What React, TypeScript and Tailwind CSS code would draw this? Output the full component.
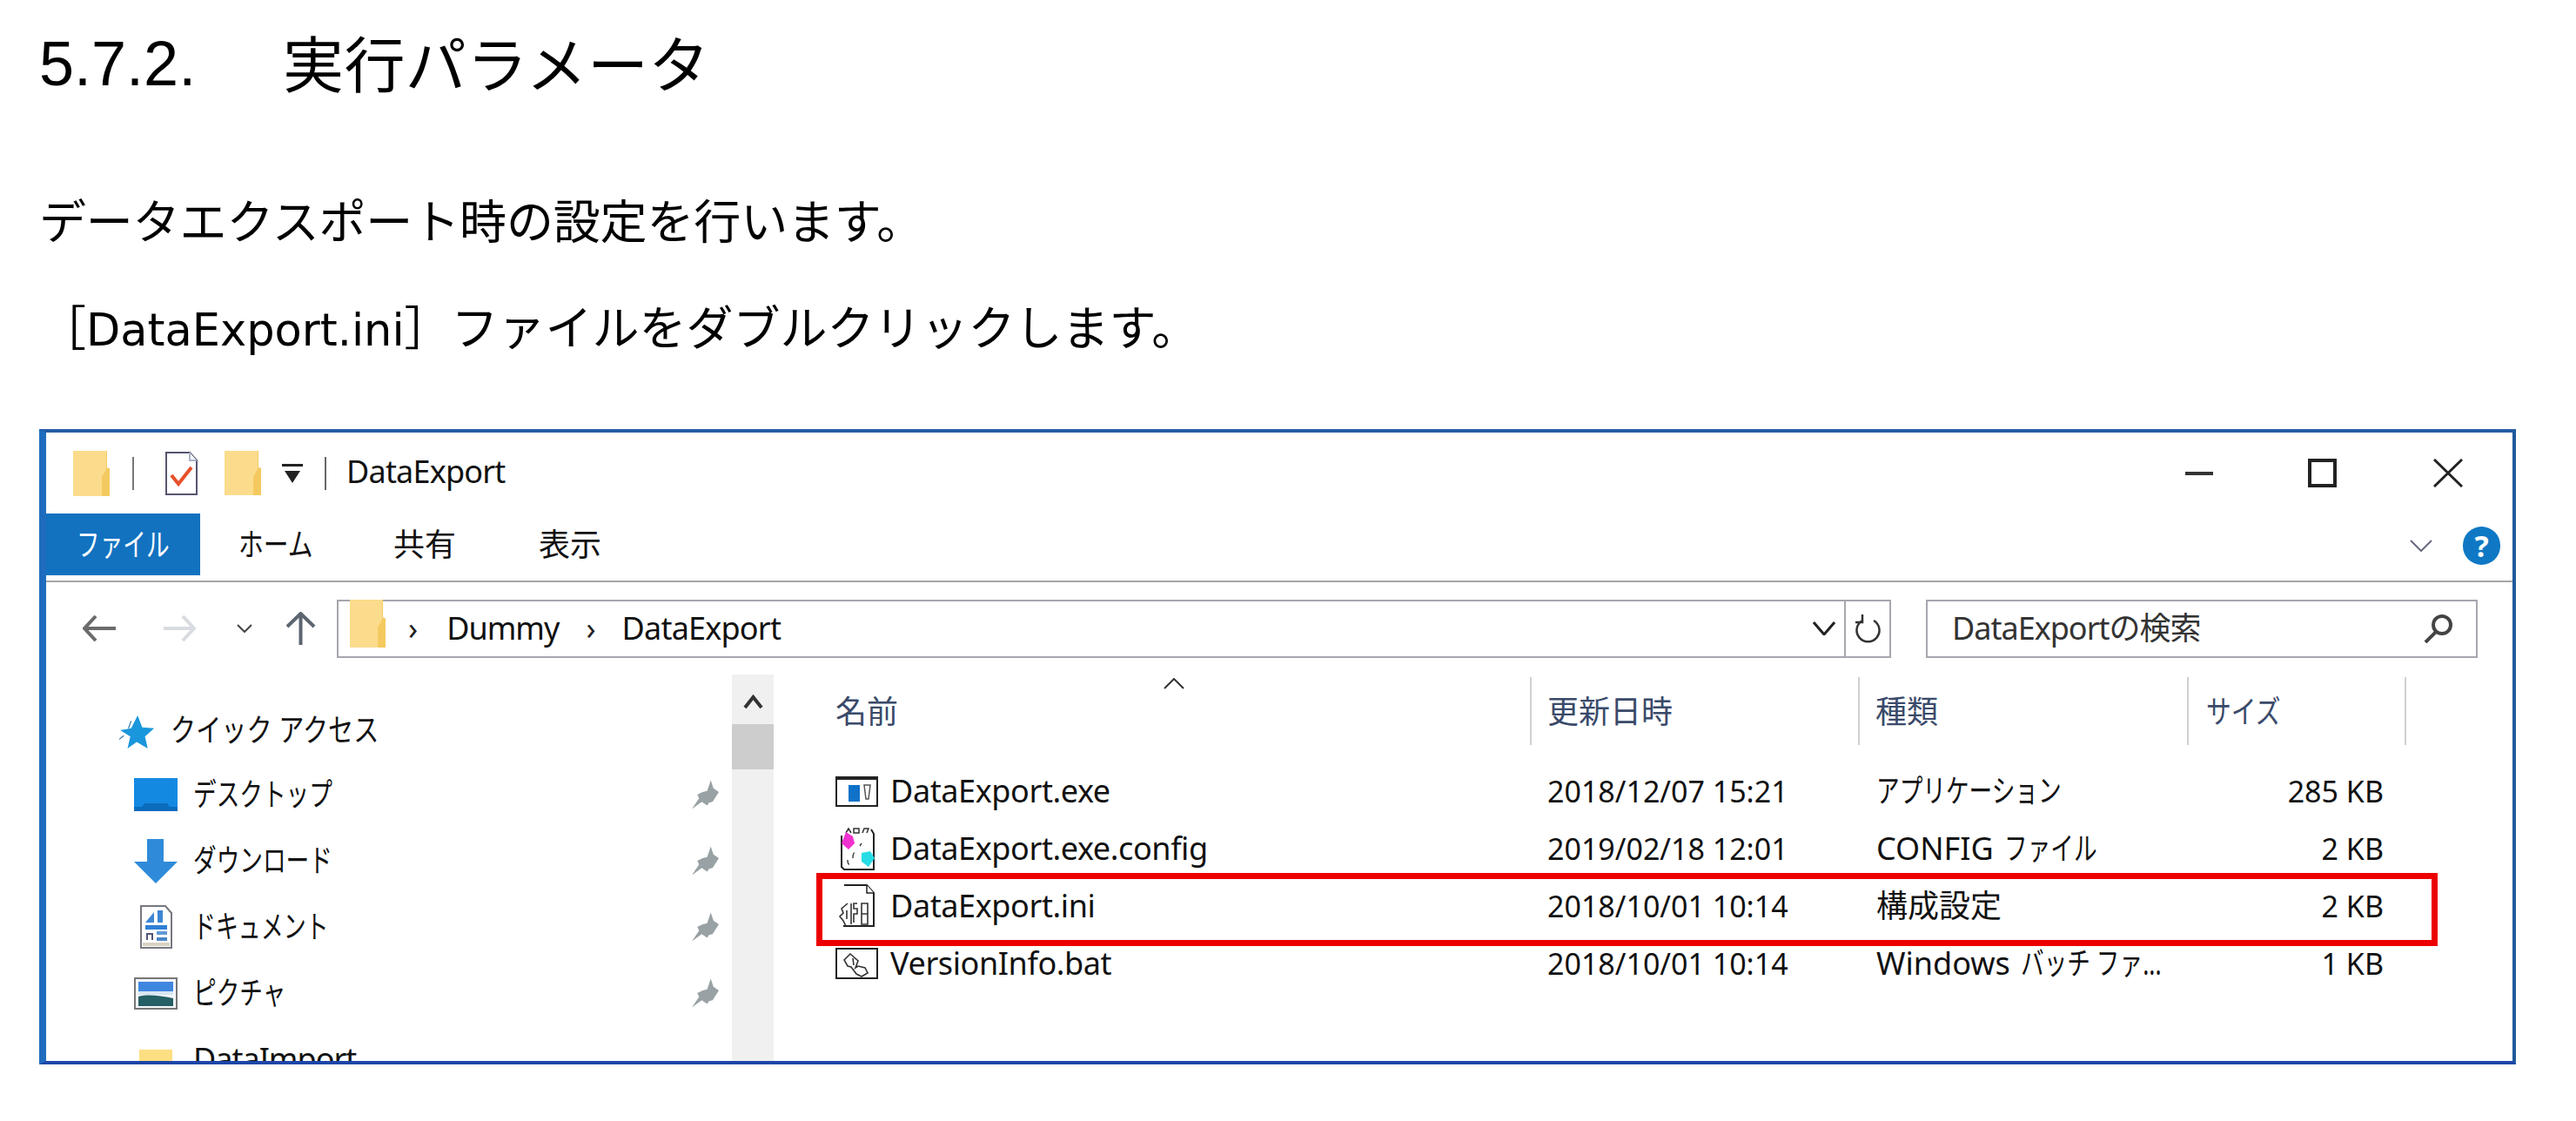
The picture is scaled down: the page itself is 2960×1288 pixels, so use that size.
const sans = "font-['Noto_Sans','Noto_Sans_CJK_JP',sans-serif]";

function Folder({ className }: { className: string }) {
  return (
    <svg className={className} viewBox="0 0 42 52" preserveAspectRatio="none">
      <rect width="39" height="52" fill="#fbdc8c" />
      <path d="M39 0h-1v52h4V22l-3-3z" fill="#f3cb66" />
      <path d="M33 52V30l6-10h3v32z" fill="#f4c95f" />
    </svg>
  );
}

function Pin() {
  return (
    <svg className="w-[32px] h-[34px] ml-auto mr-[15px]" viewBox="0 0 31 32">
      <path d="M22 0l3 9 6 4-7 11-4 1-2 3-6-4-11 8 8-12-2-4 6-3 5-1 2-6z" fill="#98a1a4" />
    </svg>
  );
}

function Narrow({ children, className }: { children: string; className: string }) {
  return <span className={"inline-block origin-left whitespace-nowrap " + className}>{children}</span>;
}

function ExeIcon() {
  return (
    <svg className="w-[49px] h-[36px]" viewBox="0 0 49 36">
      <rect x="1" y="2" width="47" height="33" fill="#fff" stroke="#222" strokeWidth="2" />
      <rect x="1" y="1" width="47" height="4" fill="#222" />
      <rect x="15" y="11" width="13" height="19" fill="#0f72c8" />
      <path d="M33 11h7l-2 16h-3z" fill="none" stroke="#555" strokeWidth="1.5" />
    </svg>
  );
}

function ConfigIcon() {
  return (
    <svg className="w-[42px] h-[50px]" viewBox="0 0 42 50">
      <path d="M3 10v36l3 3h34V8l-3-5" fill="#fff" stroke="#222" strokeWidth="2" />
      <path d="M8 7l3-5 3 5M17 2h6v5h-6zM27 7l2-5h5l-2 5" fill="none" stroke="#333" strokeWidth="1.5" />
      <path d="M8 6l8 5 2 8-7 7-8-7z" fill="#f032cf" />
      <path d="M26 30l10-2 5 8-7 10-8-6z" fill="#28dce6" />
      <path d="M16 36c0-4 1-6 2-6M24 22l2-3M10 38c0 3 1 5 2 5" fill="none" stroke="#444" strokeWidth="1.5" />
    </svg>
  );
}

function IniIcon() {
  return (
    <svg className="w-[42px] h-[50px]" viewBox="0 0 42 50">
      <path d="M6 1h26l8 9v38H5" fill="#fff" stroke="#222" strokeWidth="2" />
      <path d="M32 1v9h8" fill="#fff" stroke="#222" strokeWidth="1.5" />
      <path d="M10 22l-7 6 2 5-4 4 4 5 3 6M14 22v24M21 22h-4v6h4v6h-4v10M26 22h7v24h-7zM26 34h7M9 30v10" fill="none" stroke="#333" strokeWidth="1.6" />
    </svg>
  );
}

function BatIcon() {
  return (
    <svg className="w-[49px] h-[36px]" viewBox="0 0 49 36">
      <rect x="1" y="1" width="47" height="34" fill="#fff" stroke="#222" strokeWidth="2" />
      <path d="M10 14l7-7 9 8-3 8 3-2 8 2 3 6-7 4-6-3-6-8-4-1zM20 12l1 8" fill="none" stroke="#333" strokeWidth="1.6" />
    </svg>
  );
}

const navRows = [
  {
    label: <Narrow className="scale-x-[.74]">デスクトップ</Narrow>,
    icon: (
      <svg className="w-[50px] h-[38px]" viewBox="0 0 50 38">
        <rect width="50" height="38" fill="#1489e2" />
        <path d="M0 33h9l3-4h26l3 4h9v5H0z" fill="#0b6cbd" />
      </svg>
    ),
  },
  {
    label: <Narrow className="scale-x-[.74]">ダウンロード</Narrow>,
    icon: (
      <svg className="w-[50px] h-[51px]" viewBox="0 0 50 51">
        <path d="M15 0h19v26h16L25 51 0 26h15z" fill="#2f8bd9" />
      </svg>
    ),
  },
  {
    label: <Narrow className="scale-x-[.72]">ドキュメント</Narrow>,
    icon: (
      <svg className="w-[37px] h-[50px]" viewBox="0 0 37 50">
        <path d="M1 1h28l7 8v40H1z" fill="#fff" stroke="#77777f" strokeWidth="2" />
        <path d="M6 20l10-12v12zM20 6h6v14h-6z" fill="#3d86d2" />
        <rect x="6" y="23" width="25" height="5" fill="#2f7fd6" />
        <rect x="19" y="30" width="12" height="4" fill="#5f9ad8" />
        <rect x="19" y="37" width="12" height="4" fill="#4a86c8" />
        <path d="M8 40v-7h6v7" fill="none" stroke="#557" strokeWidth="2" />
        <rect x="3" y="43" width="31" height="4" fill="#d9d2c2" />
      </svg>
    ),
  },
  {
    label: <Narrow className="scale-x-[.74]">ピクチャ</Narrow>,
    icon: (
      <svg className="w-[50px] h-[37px]" viewBox="0 0 50 37">
        <rect x="1" y="1" width="48" height="35" fill="#f4f6f8" stroke="#777" strokeWidth="2" />
        <rect x="5" y="5" width="40" height="11" fill="#3f86df" />
        <path d="M5 16h40v4H5z" fill="#d8e6f2" />
        <path d="M5 22c12-3 24-1 40 2v9H5z" fill="#265f66" />
      </svg>
    ),
  },
  {
    label: <span className="whitespace-nowrap tracking-[-1px]">DataImport</span>,
    icon: <div className="w-[38px] h-[50px] mt-[28px] bg-[#fddf82]" />,
    plain: true,
  },
];

const fileRows = [
  { icon: <ExeIcon />, name: "DataExport.exe", date: "2018/12/07 15:21", type: <Narrow className="scale-x-[.74]">アプリケーション</Narrow>, size: "285 KB" },
  {
    icon: <ConfigIcon />,
    name: "DataExport.exe.config",
    date: "2019/02/18 12:01",
    type: (
      <span className="flex whitespace-nowrap">
        <span className="mr-[12px]">CONFIG</span>
        <Narrow className="scale-x-[.74]">ファイル</Narrow>
      </span>
    ),
    size: "2 KB",
  },
  { icon: <IniIcon />, name: "DataExport.ini", date: "2018/10/01 10:14", type: "構成設定", size: "2 KB" },
  {
    icon: <BatIcon />,
    name: "VersionInfo.bat",
    date: "2018/10/01 10:14",
    type: (
      <span className="flex whitespace-nowrap">
        <span className="mr-[12px]">Windows</span>
        <Narrow className="scale-x-[.74]">バッチ ファ...</Narrow>
      </span>
    ),
    size: "1 KB",
  },
];

export default function App() {
  return (
    <div className={"w-[2960px] h-[1288px] overflow-hidden bg-white pl-[45px] pt-[38px] text-black " + sans}>
      <h1 className="flex h-[70px] items-center text-[72px] font-normal font-['Liberation_Sans','Noto_Sans_CJK_JP',sans-serif]">
        <span className="w-[280px]">5.7.2.</span>
        <span className="mt-[-6px] text-[70px] tracking-[0.4px] font-['Noto_Sans_CJK_JP',sans-serif]">実行パラメータ</span>
      </h1>
      <p className="mt-[114px] h-[60px] text-[54px] leading-[60px] tracking-[-0.15px] font-['Noto_Sans_CJK_JP',sans-serif]">
        データエクスポート時の設定を行います。
      </p>
      <p className="mt-[62px] h-[60px] whitespace-nowrap text-[54px] leading-[60px] font-['Noto_Sans_CJK_JP',sans-serif]">
        ［<span className="text-[51px] font-['DejaVu_Sans',sans-serif]">DataExport.ini</span>］ファイルをダブルクリックします。
      </p>

      <div className="mt-[89px] flex h-[730px] w-[2846px] flex-col border-t-[4px] border-r-[4px] border-b-[4px] border-l-[8px] border-t-[#265ca6] border-r-[#1f5a9a] border-b-[#1c46a8] border-l-[#1f6cbf] text-[36px] leading-[44px] text-[#111]">
        {/* title bar */}
        <div className="flex h-[93px] shrink-0 items-center pl-[31px] pr-[57px]">
          <Folder className="h-[52px] w-[42px]" />
          <div className="ml-[26px] h-[38px] w-[2px] bg-[#777]" />
          <svg className="ml-[36px] h-[50px] w-[37px]" viewBox="0 0 37 50">
            <path d="M1 1h27l8 9v39H1z" fill="#fff" stroke="#55556f" strokeWidth="2" />
            <path d="M28 1v9h8" fill="#fff" stroke="#a8b4c8" strokeWidth="2" />
            <path d="M7 27l8 10L30 18" fill="none" stroke="#e8502a" strokeWidth="4" />
          </svg>
          <Folder className="ml-[31px] h-[51px] w-[42px]" />
          <svg className="ml-[24px] h-[24px] w-[24px]" viewBox="0 0 24 24">
            <rect width="24" height="3" y="1" fill="#222" />
            <path d="M3 9h18l-9 14z" fill="#222" />
          </svg>
          <div className="ml-[25px] h-[38px] w-[2px] bg-[#666]" />
          <span className="ml-[23px] mt-[-3px] tracking-[-0.8px]">DataExport</span>
          <div className="ml-auto h-[4px] w-[32px] bg-[#333]" />
          <div className="ml-[109px] h-[33px] w-[33px] border-[4px] border-[#222]" />
          <svg className="ml-[111px] h-[33px] w-[34px]" viewBox="0 0 34 33">
            <path d="M1 1l32 31M33 1L1 32" stroke="#222" strokeWidth="3" />
          </svg>
        </div>

        {/* ribbon tabs */}
        <div className="flex h-[79px] shrink-0 border-b-[2px] border-[#a5a5a5] pb-[6px]">
          <div className="w-[177px] bg-[#1272c0] pl-[35px] pt-[14px] text-white">
            <Narrow className="scale-x-[.74]">ファイル</Narrow>
          </div>
          <div className="ml-[44px] w-[178px] pt-[14px]">
            <Narrow className="scale-x-[.8]">ホーム</Narrow>
          </div>
          <div className="w-[167px] pt-[14px]">共有</div>
          <div className="pt-[14px]">表示</div>
          <svg className="ml-auto mr-[35px] mt-[30px] h-[14px] w-[26px]" viewBox="0 0 26 14">
            <path d="M1 1l12 12L25 1" fill="none" stroke="#666a80" strokeWidth="2" />
          </svg>
          <div className="mr-[14px] mt-[15px] flex h-[44px] w-[43px] items-center justify-center rounded-full bg-[#0f78c4] text-[34px] font-bold text-white">
            ?
          </div>
        </div>

        {/* address bar */}
        <div className="flex h-[106px] shrink-0 items-center pl-[42px]">
          <svg className="h-[30px] w-[38px]" viewBox="0 0 38 30">
            <path d="M15 1L2 15l13 14M2 15h36" fill="none" stroke="#6b6b6b" strokeWidth="4" />
          </svg>
          <svg className="ml-[55px] h-[30px] w-[37px]" viewBox="0 0 37 30">
            <path d="M22 1l13 14-13 14M35 15H0" fill="none" stroke="#d8dce0" strokeWidth="4" />
          </svg>
          <svg className="ml-[47px] h-[10px] w-[18px]" viewBox="0 0 18 10">
            <path d="M1 1l8 8 8-8" fill="none" stroke="#444" strokeWidth="2" />
          </svg>
          <svg className="ml-[38px] h-[38px] w-[35px]" viewBox="0 0 35 38">
            <path d="M2 17L17.500 2 33 17M17.500 2v36" fill="none" stroke="#5c6670" strokeWidth="4" />
          </svg>
          <div className="ml-[24px] flex h-[67px] w-[1786px] items-center border-[2px] border-[#a6a6ae] pl-[13px]">
            <Folder className="mb-[12px] h-[55px] w-[41px]" />
            <span className="ml-[26px] text-[#222]">›</span>
            <span className="ml-[33px] tracking-[-1px]">Dummy</span>
            <span className="ml-[31px] text-[#222]">›</span>
            <span className="ml-[30px] tracking-[-0.8px]">DataExport</span>
            <svg className="ml-auto mr-[10px] h-[16px] w-[26px]" viewBox="0 0 26 16">
              <path d="M1 1l12 14L25 1" fill="none" stroke="#222" strokeWidth="3" />
            </svg>
            <div className="flex h-full w-[52px] items-center justify-center border-l-[2px] border-[#a6a6ae]">
              <svg className="h-[34px] w-[29px]" viewBox="0 0 29 34">
                <path d="M8 8a13 13 0 1 0 13 0M8 1v9H0" fill="none" stroke="#333" strokeWidth="2.500" />
              </svg>
            </div>
          </div>
          <div className="ml-[40px] flex h-[67px] w-[634px] items-center border-[2px] border-[#a6a6ae] pl-[28px] pr-[26px] text-[#333]">
            <span className="tracking-[-1px]">DataExportの検索</span>
            <svg className="ml-auto h-[34px] w-[34px]" viewBox="0 0 34 34">
              <circle cx="21" cy="13" r="10" fill="none" stroke="#444" strokeWidth="4" />
              <path d="M14 21L2 33" stroke="#444" strokeWidth="4" />
            </svg>
          </div>
        </div>

        <div className="flex min-h-0 flex-1 overflow-hidden">
          {/* nav pane */}
          <div className="flex w-[788px] shrink-0 flex-col pt-[27px]">
            <div className="flex h-[73px] shrink-0 items-start pl-[85px]">
              <svg className="mt-[20px] ml-[-6px] h-[38px] w-[47px]" viewBox="0 0 41 36">
                <path d="M23 0l5 13 13 1-10 9 3 13-12-7-10 7 3-13L4 16l12-2z" fill="#1a96dc" />
                <path d="M16 6l-3 8M3 26l5-4" stroke="#1a6ca8" strokeWidth="1" />
              </svg>
              <Narrow className="ml-[17px] mt-[15px] scale-x-[.81]">クイック アクセス</Narrow>
            </div>
            {navRows.map((row, i) => (
              <div key={i} className="flex h-[76px] shrink-0 items-center">
                <div className="ml-[101px] flex w-[50px] justify-center">{row.icon}</div>
                <div className="ml-[18px]">{row.label}</div>
                {!row.plain && <Pin />}
              </div>
            ))}
          </div>

          {/* scrollbar */}
          <div className="flex w-[48px] shrink-0 flex-col items-center bg-[#f0f0f0] pt-[23px]">
            <svg className="h-[17px] w-[23px]" viewBox="0 0 23 17">
              <path d="M2 15l9.500-12L21 15" fill="none" stroke="#333" strokeWidth="4" />
            </svg>
            <div className="mt-[17px] h-[52px] w-full bg-[#cdcdcd]" />
          </div>

          {/* file list */}
          <div className="relative flex-1 pl-[71px]">
            <div className="mt-[3px] grid h-[78px] grid-cols-[798px_377px_378px_252px] text-[#3a4a6a]">
              <div className="relative pt-[18px]">
                名前
                <svg className="absolute left-[377px] top-[1px] h-[13px] w-[24px]" viewBox="0 0 24 13">
                  <path d="M1 12L12 1l11 11" fill="none" stroke="#333" strokeWidth="2" />
                </svg>
              </div>
              <div className="border-l-[2px] border-[#d0d0d0] pl-[18px] pt-[18px]">更新日時</div>
              <div className="border-l-[2px] border-[#d0d0d0] pl-[18px] pt-[18px]">種類</div>
              <div className="border-x-[2px] border-[#d0d0d0] pl-[20px] pt-[18px]">
                <Narrow className="scale-x-[.8]">サイズ</Narrow>
              </div>
            </div>
            <div className="mt-[20px]">
              {fileRows.map((row) => (
                <div key={row.name} className="grid h-[66px] grid-cols-[798px_377px_378px_252px] items-center">
                  <div className="flex items-center">
                    <div className="mr-[14px] flex w-[49px] justify-center">{row.icon}</div>
                    <span className="tracking-[-0.4px]">{row.name}</span>
                  </div>
                  <div className="pl-[20px] text-[34px]">{row.date}</div>
                  <div className="pl-[21px]">{row.type}</div>
                  <div className="pr-[26px] text-right text-[34px]">{row.size}</div>
                </div>
              ))}
            </div>
            {/* red highlight over the DataExport.ini row */}
            <div className="absolute left-[49px] top-[228px] h-[84px] w-[1863px] border-[7px] border-[#ec0000]" />
          </div>
        </div>
      </div>
    </div>
  );
}
